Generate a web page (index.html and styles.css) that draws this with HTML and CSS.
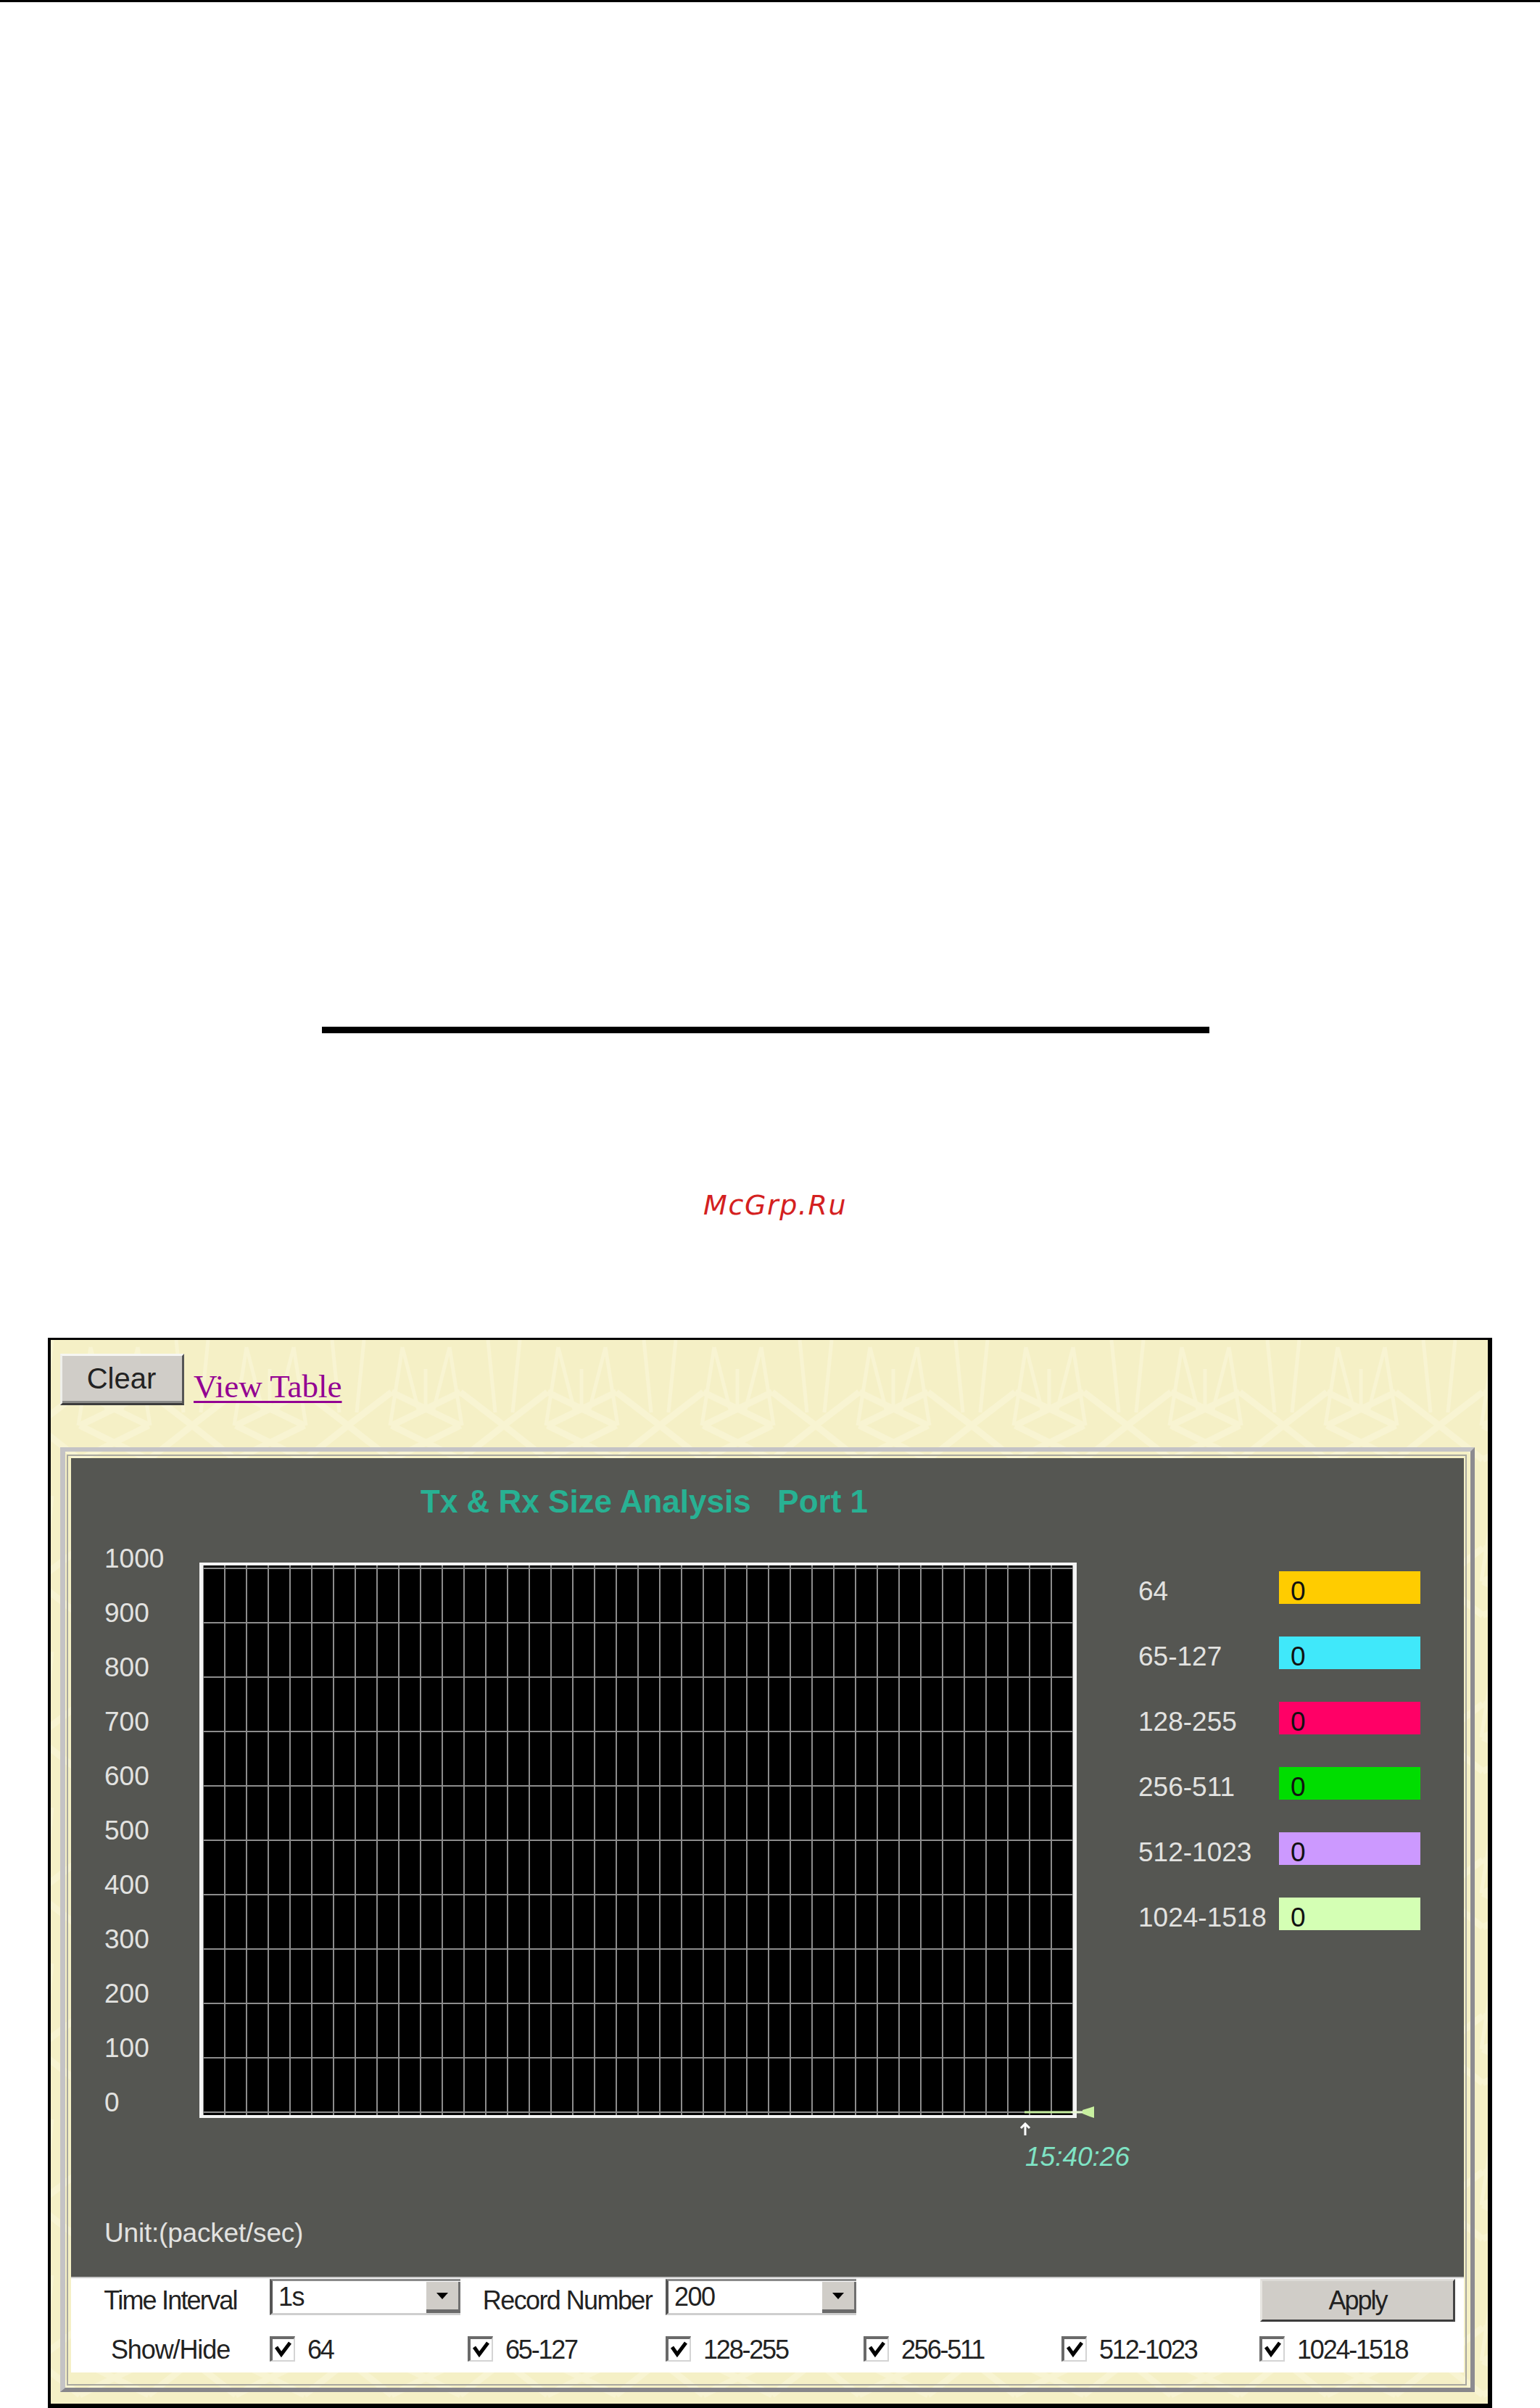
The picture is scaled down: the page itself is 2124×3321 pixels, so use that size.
FILE: index.html
```html
<!DOCTYPE html>
<html lang="en">
<head>
<meta charset="utf-8">
<title>Tx &amp; Rx Size Analysis</title>
<link rel="stylesheet" href="styles.css">
</head>
<body>
<div class="topline"></div>
<div class="rule"></div>
<div class="watermark">McGrp.Ru</div>
<main class="frame">
  <svg class="texture" aria-hidden="true">
    <defs>
      <pattern id="weave" width="215" height="215" patternUnits="userSpaceOnUse" x="-20" y="0">
        <g fill="none" stroke="#f8f4d2" stroke-width="9">
          <path d="M60 118L155 165M155 72L60 118M155 118L60 165M60 72L155 118"/>
          <path d="M0 118L60 72M215 118L155 72M0 118L60 165M215 118L155 165"/>
        </g>
        <g fill="none" stroke="#f8f4d2" stroke-width="5">
          <path d="M75 10L58 118M75 10L98 100M140 10L157 118M140 10L117 100"/>
          <path d="M22 0L12 100M193 0L203 100M107 40V100"/>
        </g>
      </pattern>
    </defs>
    <rect width="100%" height="100%" fill="url(#weave)"/>
  </svg>
  <div class="toolbar">
    <button class="btn btn-clear" type="button">Clear</button>
    <a class="view-link" href="#">View Table</a>
  </div>
  <section class="panel">
    <div class="panel-inner">
      <div class="graph">
        <h1 class="graph-title">Tx &amp; Rx Size Analysis   Port 1</h1>
        <div class="graph-body">
          <div class="y-axis">
            <span>1000</span><span>900</span><span>800</span><span>700</span><span>600</span><span>500</span><span>400</span><span>300</span><span>200</span><span>100</span><span>0</span>
          </div>
          <div class="chart-col">
            <div class="chart">
              <svg class="marker" width="96" height="16" viewBox="0 0 96 16" aria-hidden="true">
                <path d="M0 8H64" stroke="#c8f0a0" stroke-width="3"/>
                <path d="M64 8H81" stroke="#e6f6d2" stroke-width="3"/>
                <path d="M80 5L90 2L96 0V16L90 14L80 10Z" fill="#c8f0a0"/>
              </svg>
            </div>
            <svg class="up-arrow" width="16" height="18" viewBox="0 0 16 18" aria-hidden="true">
              <path d="M8 18V2M2 8L8 2L14 8" fill="none" stroke="#fff" stroke-width="3"/>
            </svg>
            <div class="time">15:40:26</div>
          </div>
          <ul class="legend">
            <li class="legend-row"><span class="legend-name">64</span><span class="swatch c64">0</span></li>
            <li class="legend-row"><span class="legend-name">65-127</span><span class="swatch c65">0</span></li>
            <li class="legend-row"><span class="legend-name">128-255</span><span class="swatch c128">0</span></li>
            <li class="legend-row"><span class="legend-name">256-511</span><span class="swatch c256">0</span></li>
            <li class="legend-row"><span class="legend-name">512-1023</span><span class="swatch c512">0</span></li>
            <li class="legend-row"><span class="legend-name">1024-1518</span><span class="swatch c1024">0</span></li>
          </ul>
        </div>
        <div class="unit">Unit:(packet/sec)</div>
      </div>
      <div class="controls">
        <div class="ctl-label ls-time">Time Interval</div>
        <div class="select"><span class="select-value">1s</span><span class="select-btn"><i class="tri"></i></span></div>
        <div class="ctl-label ls-rec">Record Number</div>
        <div class="select"><span class="select-value">200</span><span class="select-btn"><i class="tri"></i></span></div>
        <button class="btn btn-apply" type="button">Apply</button>

        <div class="ctl-label ls-show show-label">Show/Hide</div>
        <div class="check"><span class="box"><svg width="29" height="29" viewBox="0 0 29 29" aria-hidden="true"><path d="M5 11L12 21L24 5" fill="none" stroke="#000" stroke-width="5"/></svg></span><span class="check-text">64</span></div>
        <div class="check"><span class="box"><svg width="29" height="29" viewBox="0 0 29 29" aria-hidden="true"><path d="M5 11L12 21L24 5" fill="none" stroke="#000" stroke-width="5"/></svg></span><span class="check-text">65-127</span></div>
        <div class="check"><span class="box"><svg width="29" height="29" viewBox="0 0 29 29" aria-hidden="true"><path d="M5 11L12 21L24 5" fill="none" stroke="#000" stroke-width="5"/></svg></span><span class="check-text">128-255</span></div>
        <div class="check"><span class="box"><svg width="29" height="29" viewBox="0 0 29 29" aria-hidden="true"><path d="M5 11L12 21L24 5" fill="none" stroke="#000" stroke-width="5"/></svg></span><span class="check-text">256-511</span></div>
        <div class="check"><span class="box"><svg width="29" height="29" viewBox="0 0 29 29" aria-hidden="true"><path d="M5 11L12 21L24 5" fill="none" stroke="#000" stroke-width="5"/></svg></span><span class="check-text">512-1023</span></div>
        <div class="check"><span class="box"><svg width="29" height="29" viewBox="0 0 29 29" aria-hidden="true"><path d="M5 11L12 21L24 5" fill="none" stroke="#000" stroke-width="5"/></svg></span><span class="check-text">1024-1518</span></div>
      </div>
    </div>
  </section>
</main>
</body>
</html>
```
FILE: styles.css
```css
* { box-sizing: border-box; }
html, body { margin: 0; padding: 0; }
body {
  width: 2124px;
  height: 3321px;
  overflow: hidden;
  background: #fff;
  font-family: "Liberation Sans", Arial, sans-serif;
}
.topline { height: 3px; background: #000; }
.rule { width: 1224px; height: 9px; margin: 1413px 0 0 444px; background: #000; }
.watermark {
  margin: 212px 0 0 970px;
  font: italic 38px/50px "DejaVu Sans", sans-serif;
  letter-spacing: 1.6px;
  color: #d42020;
}
.frame {
  position: relative;
  width: 1992px;
  height: 1476px;
  margin: 158px 0 0 66px;
  border-style: solid;
  border-color: #000;
  border-width: 3px 6px 6px 4px;
  background: #f5f0c6;
}
.texture { position: absolute; left: 0; top: 0; width: 100%; height: 100%; }

.toolbar {
  position: relative;
  display: flex;
  align-items: flex-start;
  gap: 13px;
  height: 148px;
  padding: 19px 0 0 13px;
}
.btn {
  display: block;
  margin: 0;
  padding: 0;
  font-family: inherit;
  color: #222;
  background: #d0cdc8;
  border-style: solid;
  border-width: 3px;
  border-color: #f6f6f2 #555 #3c3c3c #efefea;
  box-shadow: inset 0 -3px 0 #8a8a88;
}
.btn-clear { width: 171px; height: 71px; font-size: 40px; padding-right: 2px; padding-bottom: 2px; }
.view-link {
  margin-top: 20px;
  font: 45px/50px "Liberation Serif", "Times New Roman", serif;
  color: #930093;
  text-decoration: underline;
  text-decoration-thickness: 3px;
  text-underline-offset: 5px;
}

.panel {
  position: relative;
  width: 1951px;
  height: 1303px;
  margin-left: 13px;
  padding: 4px 5px 3px 2px;
  border-style: solid;
  border-width: 6px 6px 6px 7px;
  border-color: #c4c3c5 #8c8b90 #87868a #c4c3c5;
}
.panel-inner {
  height: 100%;
  padding: 3px 2px 15px 4px;
  border: 2px solid #a9a89f;
}
.graph {
  height: 1129px;
  background: #555652;
  color: #e2e2e0;
  font-size: 37px;
}
.graph-title {
  margin: 0;
  padding: 35px 0 0 482px;
  font-size: 44px;
  line-height: 50px;
  font-weight: bold;
  color: #28b193;
  white-space: pre;
}
.graph-body {
  display: flex;
  align-items: flex-start;
  margin-top: 16px;
  padding-left: 46px;
}
.y-axis { width: 131px; display: flex; flex-direction: column; }
.y-axis span { display: block; height: 75px; line-height: 75px; }
.chart-col { width: 1210px; padding-top: 43px; }
.chart {
  position: relative;
  height: 766px;
  border-style: solid;
  border-color: #f4f4f4;
  border-width: 4px 5px;
  background-color: #000;
  background-image:
    linear-gradient(90deg, transparent 28px, #8c8c8c 28px, #8c8c8c 30px),
    linear-gradient(180deg, transparent 73px, #8c8c8c 73px, #8c8c8c 75px);
  background-size: 30px 100%, 100% 75px;
  background-position: 1px 0, 0 5px;
  background-origin: padding-box;
}
.marker { position: absolute; left: 1133px; top: 746px; overflow: visible; }
.up-arrow { display: block; margin: 6px 0 0 1131px; }
.time {
  margin: 8px 0 0 1139px;
  font-size: 37px;
  line-height: 44px;
  font-style: italic;
  color: #7fe3c4;
  white-space: nowrap;
}
.legend {
  list-style: none;
  margin: 0;
  padding: 55px 0 0 85px;
  display: flex;
  flex-direction: column;
  gap: 45px;
}
.legend-row { display: flex; height: 45px; line-height: 55px; }
.legend-name { width: 194px; white-space: nowrap; }
.swatch { width: 195px; height: 45px; padding-left: 16px; color: #111; }
.c64 { background: #ffcc00; }
.c65 { background: #40e8fa; }
.c128 { background: #ff0066; }
.c256 { background: #00dd00; }
.c512 { background: #cc99ff; }
.c1024 { background: #d4ffb4; }
.unit { margin-top: 60px; padding-left: 46px; line-height: 46px; letter-spacing: -0.2px; }

.controls {
  display: grid;
  grid-template-columns: 274px repeat(6, 273px);
  grid-template-rows: 79px 53px;
  height: 132px;
  background: #fff;
  box-shadow: inset 0 2px 0 #c8c8c8;
  color: #222;
  font-size: 36px;
}
.ctl-label {
  margin-top: 8px;
  line-height: 50px;
  text-align: center;
  white-space: nowrap;
}
.ls-time { letter-spacing: -1.8px; }
.ls-rec { letter-spacing: -1.6px; padding-left: 2px; }
.ls-show { letter-spacing: -1.1px; padding-left: 0; }
.show-label { grid-column: 1; grid-row: 2; margin-top: 0; line-height: 44px; }
.select {
  display: flex;
  justify-content: space-between;
  align-self: start;
  width: 263px;
  height: 50px;
  margin-top: 3px;
  border-style: solid;
  border-width: 3px 0 3px 4px;
  border-color: #8a8a8a #000 #cfcfcf #555;
}
.select-value { padding-left: 8px; line-height: 44px; letter-spacing: -1.5px; }
.select-btn {
  display: flex;
  align-items: center;
  justify-content: center;
  width: 47px;
  height: 43px;
  margin-top: 1px;
  background: #d0cdc8;
  border-right: 3px solid #707070;
  border-bottom: 5px solid #6a6a6a;
}
.tri {
  width: 0;
  height: 0;
  border-style: solid;
  border-width: 9px 8px 0;
  border-color: #000 transparent transparent;
}
.btn-apply {
  grid-column: 7;
  grid-row: 1;
  align-self: start;
  width: 269px;
  height: 59px;
  margin: 3px 0 0 1px;
  font-size: 36px;
  letter-spacing: -2px;
  border-color: #dcdad6 #444 #3c3c3c #e6e4e0;
  box-shadow: none;
}
.check { grid-row: 2; display: flex; align-items: flex-start; gap: 17px; }
.box {
  display: block;
  flex: none;
  width: 35px;
  height: 35px;
  margin-top: 3px;
  background: #fff;
  border-style: solid;
  border-width: 4px 2px 2px 4px;
  border-color: #6a6a6a #d4d4d4 #d4d4d4 #6a6a6a;
}
.box svg { display: block; }
.check-text { line-height: 44px; letter-spacing: -2.2px; white-space: nowrap; }
```
